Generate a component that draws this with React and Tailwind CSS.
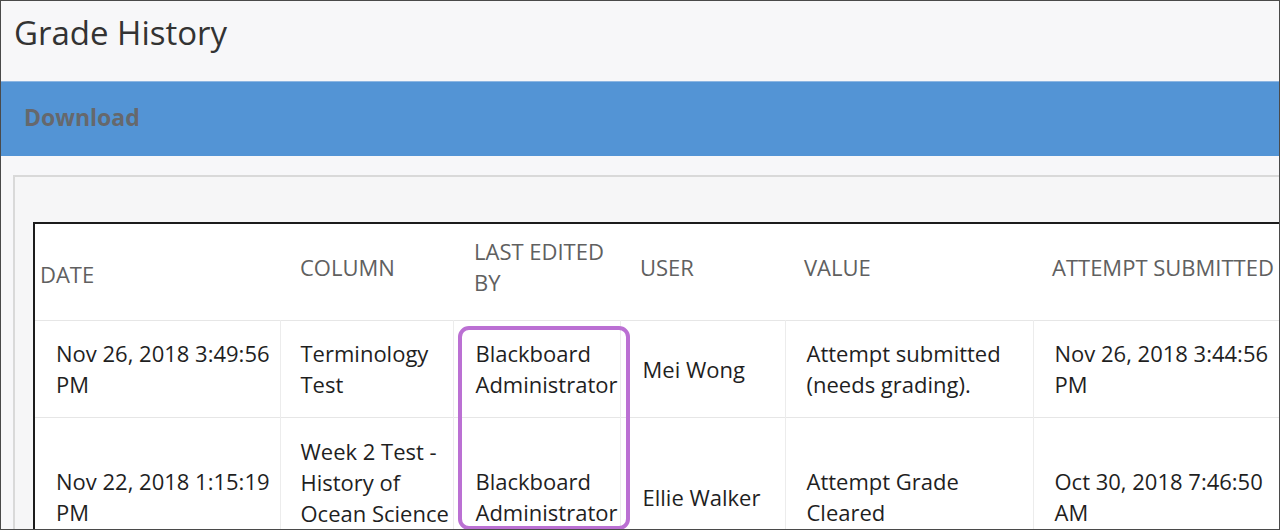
import React from 'react'

const headers = [
  { label: 'DATE', className: 'pl-[5px] pt-[26px]' },
  { label: 'COLUMN', className: 'pl-[20px] pt-[12px]' },
  { label: 'LAST EDITED BY', className: 'pl-[21px] pt-[12px]' },
  { label: 'USER', className: 'pl-[20px] pt-[12px]' },
  { label: 'VALUE', className: 'pl-[19px] pt-[12px]' },
  { label: 'ATTEMPT SUBMITTED', className: 'pl-[19px] pt-[12px]' },
]

const rows = [
  ['Nov 26, 2018 3:49:56 PM', 'Terminology Test', 'Blackboard Administrator', 'Mei Wong', 'Attempt submitted (needs grading).', 'Nov 26, 2018 3:44:56 PM'],
  ['Nov 22, 2018 1:15:19 PM', 'Week 2 Test - History of Ocean Science', 'Blackboard Administrator', 'Ellie Walker', 'Attempt Grade Cleared', 'Oct 30, 2018 7:46:50 AM'],
]

const cellPad = ['pl-[21px] pr-[4px]', 'pl-[20px] pr-0', 'pl-[22px] pr-0', 'pl-[22px] pr-[8px]', 'pl-[21px] pr-[8px]', 'pl-[21px] pr-[8px]']

const App = () => {
  return (
    <div className="w-[1280px] h-[530px] overflow-hidden border border-[#4a4a4a] bg-[#f7f7f9] font-['Open_Sans',sans-serif]">
      {/* Title */}
      <div className="h-[80px] pl-[13px] pt-[10px]">
        <h1 className="text-[33px] leading-[44px] text-[#333333] font-normal">Grade History</h1>
      </div>

      {/* Action bar */}
      <div className="h-[75px] flex items-center pl-[23px] pb-[4px] bg-[#5394d5] border-t border-[#8db6e2]">
        <span className="text-[23px] font-bold text-[#66686c]">Download</span>
      </div>

      {/* Panel */}
      <div className="pt-[19px]">
        <div className="ml-[12px] border-t-2 border-l-2 border-[#d9d9d9] bg-[#f6f6f7] pl-[18px] pt-[45px]">
          <div className="relative w-[1300px] border-2 border-[#1c1c1c] bg-white">
            <table className="table-fixed border-collapse text-[22px] leading-[31px]">
              <colgroup>
                <col className="w-[245px]" />
                <col className="w-[173px]" />
                <col className="w-[167px]" />
                <col className="w-[165px]" />
                <col className="w-[248px]" />
                <col className="w-[260px]" />
              </colgroup>
              <thead>
                <tr>
                  {headers.map(h => (
                    <th
                      key={h.label}
                      className={`pb-[22px] pr-[8px] text-left align-middle font-normal text-[#606060] ${h.className}`}
                    >
                      {h.label}
                    </th>
                  ))}
                </tr>
              </thead>
              <tbody>
                {rows.map((row, i) => (
                  <tr key={i} className={`border-t border-[#e6e6e6] ${i === 1 ? 'h-[159px]' : ''}`}>
                    {row.map((cell, j) => (
                      <td
                        key={j}
                        className={`py-[17px] text-[#1f1f1f] ${cellPad[j]} ${j > 0 ? 'border-l border-[#ececec]' : ''} ${i === 1 && j === 1 ? 'align-top pt-[18px]' : 'align-middle'}`}
                      >
                        {cell}
                      </td>
                    ))}
                  </tr>
                ))}
              </tbody>
            </table>

            {/* Highlight annotation */}
            <div className="absolute left-[423px] top-[102px] w-[172px] h-[204px] border-4 border-[#bb70d3] rounded-[11px] pointer-events-none" />
          </div>
        </div>
      </div>
    </div>
  )
}

export default App
